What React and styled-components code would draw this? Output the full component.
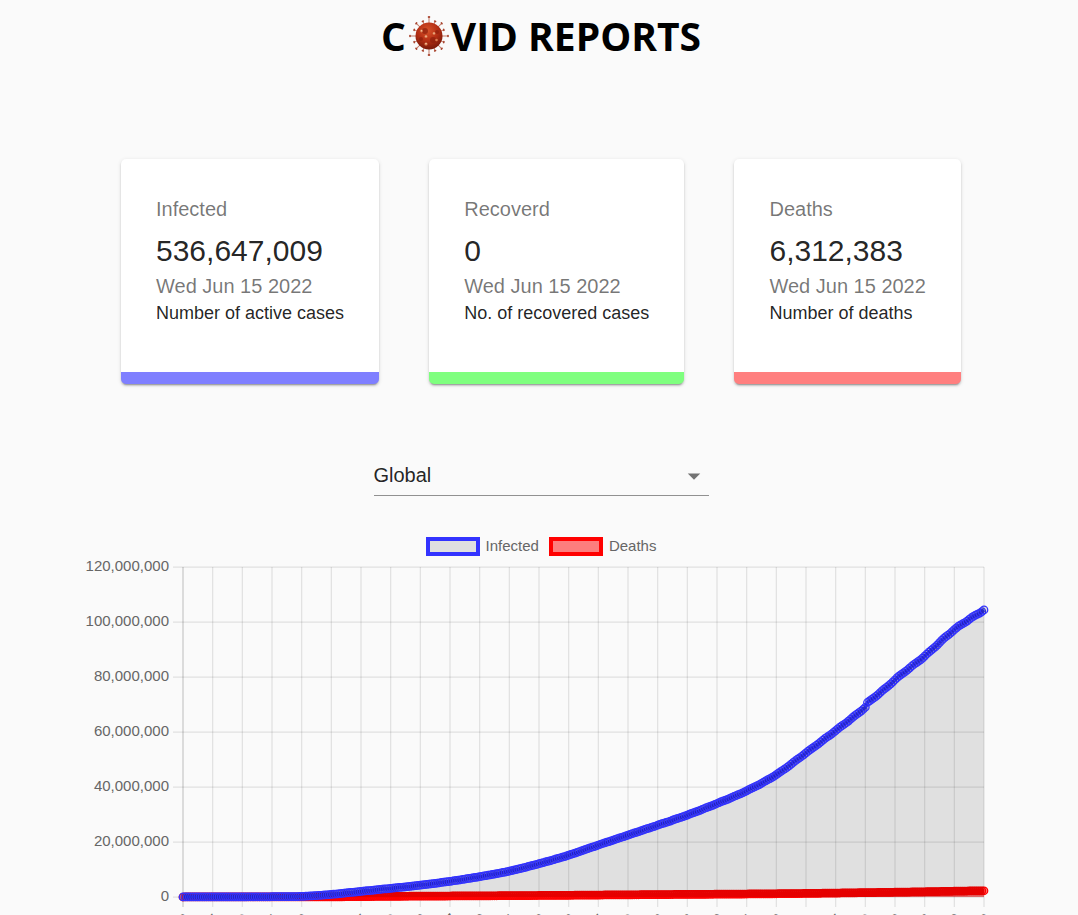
import React, { useState } from "react";
import styled, { createGlobalStyle } from "styled-components";

const GlobalStyle = createGlobalStyle`
  *, *::before, *::after { box-sizing: border-box; }
  body {
    margin: 0;
    background: #fafafa;
    color: rgba(0, 0, 0, 0.87);
    font-family: "Liberation Sans", Arial, sans-serif;
  }
`;

const Page = styled.main`
  display: flex;
  flex-direction: column;
  align-items: center;
  padding: 8px 0 8px 4px;
`;

const Title = styled.h1`
  display: flex;
  align-items: center;
  margin: 0;
  color: #000;
  font: 700 39px/56px "Open Sans", "Noto Sans", sans-serif;
  white-space: pre;
`;

const VirusIcon = styled.svg`
  width: 42px;
  height: 42px;
  margin: 0 1px 0 2px;
`;

const Cards = styled.section`
  display: flex;
  flex-wrap: wrap;
  justify-content: center;
  gap: 50px;
  width: 100%;
  max-width: 840px;
  margin-top: 95px;
`;

const Card = styled.article`
  flex: 1 1 auto;
  padding: 35px 35px 46px;
  background: #fff;
  border-bottom: 12px solid ${(p) => p.$accent};
  border-radius: 5px;
  box-shadow: 0 3px 1px -2px rgba(0, 0, 0, 0.2), 0 2px 2px rgba(0, 0, 0, 0.14),
    0 1px 4px rgba(0, 0, 0, 0.12);
`;

const CardLabel = styled.h2`
  margin: 0 0 7px;
  color: rgba(0, 0, 0, 0.54);
  font-size: 20px;
  font-weight: 400;
  line-height: 30px;
`;

const CardValue = styled.p`
  margin: 0;
  font-size: 30px;
  line-height: 40px;
`;

const CardDate = styled.p`
  margin: 0;
  color: rgba(0, 0, 0, 0.54);
  font-size: 20px;
  line-height: 30px;
`;

const CardNote = styled.p`
  margin: 0;
  font-size: 18px;
  line-height: 25px;
`;

const SelectField = styled.div`
  display: grid;
  align-items: center;
  width: 100%;
  max-width: 335px;
  margin-top: 72px;
  border-bottom: 1px solid rgba(0, 0, 0, 0.42);

  > * { grid-area: 1 / 1; }
`;

const Select = styled.select`
  appearance: none;
  width: 100%;
  height: 39px;
  padding: 0 30px 2px 0;
  border: 0;
  background: transparent;
  color: inherit;
  font: 400 20px/30px "Liberation Sans", Arial, sans-serif;
`;

const SelectArrow = styled.svg`
  justify-self: end;
  width: 30px;
  height: 30px;
  pointer-events: none;
`;

const ChartPanel = styled.section`
  width: 86%;
  max-width: 916px;
  margin-top: 40px;
`;

const Legend = styled.div`
  display: flex;
  justify-content: center;
  gap: 10px;
`;

const LegendItem = styled.button`
  display: flex;
  align-items: center;
  gap: 6px;
  padding: 0;
  border: 0;
  background: none;
  color: #666;
  font: 400 15px/20px "Liberation Sans", Arial, sans-serif;
  text-decoration: ${(p) => (p.$off ? "line-through" : "none")};
  cursor: pointer;
`;

const Swatch = styled.span`
  width: 54px;
  height: 19px;
  border: 4px solid ${(p) => p.$line};
  background: ${(p) => p.$fill};
`;

const Plot = styled.svg`
  display: block;
  width: 100%;
  height: auto;
  overflow: visible;
  font-family: "Liberation Sans", Arial, sans-serif;
  font-size: 15px;
`;

const CARDS = [
  { label: "Infected", value: 536647009, note: "Number of active cases", accent: "rgb(127, 127, 255)" },
  { label: "Recoverd", value: 0, note: "No. of recovered cases", accent: "rgb(127, 255, 127)" },
  { label: "Deaths", value: 6312383, note: "Number of deaths", accent: "rgb(255, 127, 127)" },
];

// Cumulative totals in millions, one value every 14 days from 22 Jan 2020.
const INFECTED = [
  0.001, 0.028, 0.076, 0.095, 0.22, 0.94, 2.05, 3.15, 4.3, 5.7, 7.4, 9.4, 12.1, 15.2,
  18.9, 22.5, 26.1, 29.8, 34, 38.6, 44.5, 52.4, 60.5, 69, 79, 87.6, 97.2, 104.4,
];
const DEATHS = [
  0, 0.001, 0.002, 0.003, 0.01, 0.05, 0.14, 0.23, 0.3, 0.36, 0.42, 0.48, 0.55, 0.62,
  0.71, 0.79, 0.87, 0.94, 1.01, 1.09, 1.18, 1.29, 1.43, 1.58, 1.74, 1.9, 2.1, 2.27,
];

const STEP = 14;
const DAYS = (INFECTED.length - 1) * STEP;
const LEFT = 100;
const RIGHT = 901;
const TOP = 11;
const BASE = 341;
const MAX = 120;

const dayX = (day) => LEFT + (day / DAYS) * (RIGHT - LEFT);
const valueY = (value) => BASE - (value / MAX) * (BASE - TOP);

function daily(samples, jumpDay) {
  return Array.from({ length: DAYS + 1 }, (_, day) => {
    const i = Math.min(Math.floor(day / STEP), samples.length - 2);
    const t = day / STEP - i;
    const a = samples[i];
    const b = samples[i + 1];
    const before = i > 0 ? samples[i - 1] : a;
    const after = samples[i + 2] ?? 2 * b - a;
    const m0 = (b - before) / 2;
    const m1 = (after - a) / 2;
    let value =
      (2 * t ** 3 - 3 * t ** 2 + 1) * a +
      (t ** 3 - 2 * t ** 2 + t) * m0 +
      (3 * t ** 2 - 2 * t ** 3) * b +
      (t ** 3 - t ** 2) * m1;
    value += Math.sin((day * 2 * Math.PI) / 7) * value * 0.0014;
    if (jumpDay && day > jumpDay && day < jumpDay + 10) {
      value += 1.1 * (1 - (day - jumpDay) / 10);
    }
    return [dayX(day), valueY(value)];
  });
}

const SERIES = [
  { name: "Infected", line: "#3333ff", fill: "rgba(0, 0, 0, 0.1)", points: daily(INFECTED, 322) },
  { name: "Deaths", line: "#ff0000", fill: "rgba(255, 0, 0, 0.5)", points: daily(DEATHS) },
];

const TICKS = INFECTED.map((_, i) => {
  const date = new Date(Date.UTC(2020, 0, 22 + i * STEP));
  return { x: dayX(i * STEP), label: date.toISOString().slice(0, 10) };
});

function Virus() {
  return (
    <VirusIcon viewBox="-21 -21 42 42" role="img" aria-label="O">
      <defs>
        <radialGradient id="virus" cx="0.45" cy="0.3" r="0.75">
          <stop offset="0" stopColor="#d8542b" />
          <stop offset="0.5" stopColor="#b52f14" />
          <stop offset="1" stopColor="#6f1608" />
        </radialGradient>
      </defs>
      {Array.from({ length: 16 }, (_, i) => {
        const reach = i % 4 === 0 ? 19 : i % 2 === 0 ? 18 : 16;
        return (
          <g key={i} transform={`rotate(${i * 22.5})`}>
            <path d={`M0 -12V-${reach}`} stroke="#c47a68" strokeWidth="1" />
            <ellipse cx="0" cy={-reach} rx="1.3" ry="0.9" fill="#a8452f" />
          </g>
        );
      })}
      <circle r="13.5" fill="url(#virus)" />
      <g fill="#8e200d" opacity="0.7">
        <circle cx="-4" cy="-5" r="3" />
        <circle cx="4" cy="4" r="3" />
        <circle cx="8" cy="-4" r="2" />
        <circle cx="-8" cy="3" r="2" />
      </g>
      <g fill="#d97a50">
        <circle cx="-7.5" cy="-5" r="1.4" />
        <circle cx="-3" cy="0.5" r="1.5" />
        <circle cx="5" cy="-2.5" r="1.4" />
        <circle cx="7.5" cy="4" r="1.3" />
        <circle cx="-3" cy="8" r="1.6" />
      </g>
      <g fill="#f6c8a0">
        <circle cx="-7.5" cy="-5.3" r="0.7" />
        <circle cx="-3" cy="0.2" r="0.8" />
        <circle cx="5" cy="-2.8" r="0.7" />
        <circle cx="-3" cy="7.6" r="0.8" />
      </g>
    </VirusIcon>
  );
}

function Dataset({ series }) {
  const path = series.points.map(([x, y]) => `${x.toFixed(2)} ${y.toFixed(2)}`).join("L");
  return (
    <g stroke={series.line}>
      <path d={`M${path}L${RIGHT} ${BASE}L${LEFT} ${BASE}Z`} fill={series.fill} stroke="none" />
      <path d={`M${path}`} fill="none" strokeWidth="3.75" />
      {series.points.map(([x, y], i) => (
        <circle key={i} cx={x} cy={y} r="3.75" fill={series.fill} strokeWidth="1.25" />
      ))}
    </g>
  );
}

function Chart() {
  const [hidden, setHidden] = useState([]);
  const toggle = (name) =>
    setHidden((list) => (list.includes(name) ? list.filter((n) => n !== name) : [...list, name]));

  return (
    <ChartPanel>
      <Legend>
        {SERIES.map((s) => (
          <LegendItem
            key={s.name}
            type="button"
            $off={hidden.includes(s.name)}
            aria-pressed={!hidden.includes(s.name)}
            onClick={() => toggle(s.name)}
          >
            <Swatch $line={s.line} $fill={s.fill} />
            {s.name}
          </LegendItem>
        ))}
      </Legend>
      <Plot viewBox="0 0 916 432" role="img" aria-label="Infected and deaths over time">
        <g stroke="rgba(0, 0, 0, 0.1)" strokeWidth="1.25">
          {TICKS.map((tick, i) => (
            <path
              key={tick.label}
              d={`M${tick.x} ${TOP}V${BASE + 10}`}
              stroke={i === 0 ? "rgba(0, 0, 0, 0.2)" : undefined}
            />
          ))}
          {[0, 20, 40, 60, 80, 100, 120].map((v) => (
            <path
              key={v}
              d={`M${LEFT - 10} ${valueY(v)}H${RIGHT}`}
            />
          ))}
        </g>
        <g fill="#666" textAnchor="end">
          {[0, 20, 40, 60, 80, 100, 120].map((v) => (
            <text key={v} x={LEFT - 14} y={valueY(v) + 4}>
              {(v * 1000000).toLocaleString("en-US")}
            </text>
          ))}
          {TICKS.map((tick) => (
            <text
              key={tick.label}
              transform={`translate(${tick.x + 4} ${BASE + 19}) rotate(-50)`}
              y="5"
            >
              {tick.label}
            </text>
          ))}
        </g>
        {[...SERIES]
          .reverse()
          .filter((s) => !hidden.includes(s.name))
          .map((s) => (
            <Dataset key={s.name} series={s} />
          ))}
      </Plot>
    </ChartPanel>
  );
}

export default function App() {
  return (
    <>
      <GlobalStyle />
      <Page>
        <Title>
          C<Virus />VID REPORTS
        </Title>
        <Cards>
          {CARDS.map((card) => (
            <Card key={card.label} $accent={card.accent}>
              <CardLabel>{card.label}</CardLabel>
              <CardValue>{card.value.toLocaleString("en-US")}</CardValue>
              <CardDate>Wed Jun 15 2022</CardDate>
              <CardNote>{card.note}</CardNote>
            </Card>
          ))}
        </Cards>
        <SelectField>
          <Select aria-label="Country" defaultValue="global">
            <option value="global">Global</option>
          </Select>
          <SelectArrow viewBox="0 0 24 24" fill="rgba(0, 0, 0, 0.54)" aria-hidden="true">
            <path d="M7 10l5 5 5-5z" />
          </SelectArrow>
        </SelectField>
        <Chart />
      </Page>
    </>
  );
}
